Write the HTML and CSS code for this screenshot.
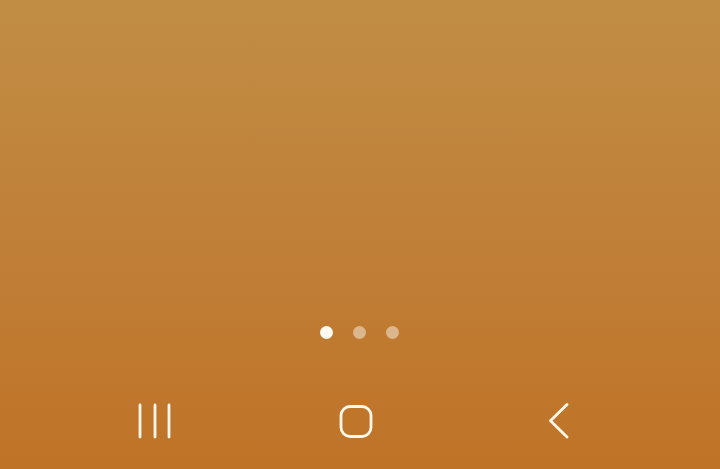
FILE: index.html
```html
<!DOCTYPE html>
<html lang="en">
<head>
<meta charset="utf-8">
<title>Home</title>
<link rel="stylesheet" href="styles.css">
</head>
<body>
<main class="screen">
  <div class="dots">
    <span class="dot active"></span>
    <span class="dot"></span>
    <span class="dot"></span>
  </div>
  <nav class="navbar">
    <button class="nav-btn" aria-label="Recent apps">
      <svg viewBox="0 0 36 36" width="36" height="36"><path d="M3 2v32M18 2v32M32 2v32"/></svg>
    </button>
    <button class="nav-btn" aria-label="Home">
      <svg viewBox="0 0 36 36" width="36" height="36"><rect x="3" y="3.5" width="30" height="30" rx="9"/></svg>
    </button>
    <button class="nav-btn" aria-label="Back">
      <svg viewBox="0 0 36 36" width="36" height="36"><path d="M27 1.5L10.5 17.7L27 34"/></svg>
    </button>
  </nav>
</main>
</body>
</html>
```

FILE: styles.css
```css
* { box-sizing: border-box; }
html, body { margin: 0; padding: 0; }
body {
  width: 720px;
  height: 469px;
  overflow: hidden;
  font-family: "Roboto", "Liberation Sans", sans-serif;
}
.screen {
  width: 720px;
  height: 469px;
  display: flex;
  flex-direction: column;
  justify-content: flex-end;
  background: linear-gradient(to bottom, #c18d45 0%, #c0813a 45%, #bf7327 100%);
}
.dots {
  display: flex;
  justify-content: center;
  gap: 20px;
  padding-right: 2px;
  margin-bottom: 58px;
}
.dot {
  width: 13px;
  height: 13px;
  border-radius: 50%;
  background: rgba(255, 255, 255, 0.45);
}
.dot.active {
  background: #fffaf2;
}
.navbar {
  height: 72px;
  padding: 6px 0 0 54px;
  display: grid;
  grid-template-columns: repeat(3, 201.5px);
  align-items: start;
}
.nav-btn {
  border: 0;
  padding: 0;
  margin: 0;
  background: none;
  justify-self: center;
  width: 36px;
  height: 36px;
  line-height: 0;
}
.nav-btn svg {
  fill: none;
  stroke: #fff7ea;
  stroke-width: 2.8;
  stroke-linecap: round;
  stroke-linejoin: round;
}
```
